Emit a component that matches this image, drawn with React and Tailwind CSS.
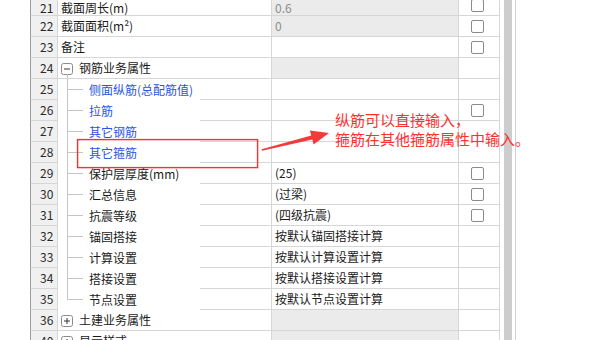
import React from "react";

const rows = [
  { no: 21, name: "截面周长(m)", value: "0.6", muted: true, check: true, first: true },
  { no: 22, name: "截面面积(m²)", value: "0", muted: true, check: true },
  { no: 23, name: "备注", value: "", check: true },
  { no: 24, name: "钢筋业务属性", group: "open" },
  { no: 25, name: "侧面纵筋(总配筋值)", child: true, blue: true },
  { no: 26, name: "拉筋", child: true, blue: true, check: true },
  { no: 27, name: "其它钢筋", child: true, blue: true },
  { no: 28, name: "其它箍筋", child: true, blue: true },
  { no: 29, name: "保护层厚度(mm)", value: "(25)", child: true, check: true },
  { no: 30, name: "汇总信息", value: "(过梁)", child: true, check: true },
  { no: 31, name: "抗震等级", value: "(四级抗震)", child: true, check: true },
  { no: 32, name: "锚固搭接", value: "按默认锚固搭接计算", child: true },
  { no: 33, name: "计算设置", value: "按默认计算设置计算", child: true },
  { no: 34, name: "搭接设置", value: "按默认搭接设置计算", child: true },
  { no: 35, name: "节点设置", value: "按默认节点设置计算", child: true, last: true },
  { no: 36, name: "土建业务属性", group: "closed" },
  { no: 40, name: "显示样式", group: "closed" },
];

const ExpandBox = ({ open }) => (
  <svg width="12" height="12" viewBox="0 0 12 12" className="shrink-0">
    <rect x="0.5" y="0.5" width="11" height="11" rx="2" fill="#fff" stroke="#8a8a8a" />
    <line x1="3" y1="6" x2="9" y2="6" stroke="#333" />
    {!open && <line x1="6" y1="3" x2="6" y2="9" stroke="#333" />}
  </svg>
);

const TreeLine = ({ last }) => (
  <svg width="31" height="21" viewBox="0 0 31 21" className="shrink-0">
    <line x1="9.5" y1="0" x2="9.5" y2={last ? 10.5 : 21} stroke="#c4c4c4" />
    <line x1="9" y1="10.5" x2="25" y2="10.5" stroke="#c4c4c4" />
  </svg>
);

const NameCell = ({ r, align }) => {
  if (r.child) {
    return (
      <div className="flex h-[21px] w-[214px] shrink-0 border-r border-[#d6d6d6]">
        <div className="flex w-[142px] shrink-0 items-center">
          <TreeLine last={r.last} />
          <span className={`whitespace-nowrap ${r.blue ? "text-[#2a55e0]" : "text-[#1a1a1a]"}`}>{r.name}</span>
        </div>
        <div className="flex-1 border-b border-[#d6d6d6]" />
      </div>
    );
  }
  if (r.group) {
    return (
      <div className="relative flex h-[21px] w-[214px] shrink-0 items-center border-r border-b border-[#d6d6d6] pl-[3px]">
        <div className="mt-[2px]">
          <ExpandBox open={r.group === "open"} />
        </div>
        <span className="ml-[6px] whitespace-nowrap text-[#1a1a1a]">{r.name}</span>
        {r.group === "open" && <div className="absolute bottom-0 left-[9px] h-[4px] w-px bg-[#c4c4c4]" />}
      </div>
    );
  }
  return (
    <div className={`flex h-[21px] w-[214px] shrink-0 border-r border-b border-[#d6d6d6] pl-[3px] text-[#1a1a1a] ${align}`}>
      <span className="whitespace-nowrap">{r.name}</span>
    </div>
  );
};

const Row = ({ r }) => {
  const grey = r.muted || r.group;
  // the first row is scrolled half out of view; its text sits low in the cell
  const align = r.first ? "items-end pb-[1px]" : "items-center";
  return (
    <div className="flex h-[21px]">
      <div className="w-[30px] shrink-0 bg-white" />
      <div
        className={`flex w-[28px] shrink-0 border-l border-r border-b border-l-[#9c9c9c] border-r-[#d6d6d6] border-b-[#d6d6d6] bg-[#f0f0f0] pl-[9px] text-[#2a2a2a] ${align}`}
      >
        {r.no}
      </div>
      <NameCell r={r} align={align} />
      <div
        className={`flex w-[187px] shrink-0 whitespace-nowrap border-r border-b border-[#d6d6d6] pl-[3px] ${align} ${
          grey ? "bg-[#ebebeb]" : "bg-white"
        } ${r.muted ? "text-[#8c8c8c]" : "text-[#1a1a1a]"}`}
      >
        {r.value}
      </div>
      <div className="flex w-[41px] shrink-0 items-center border-r border-b border-[#d6d6d6] pl-[12px]">
        {r.check && <span className="block h-[13px] w-[13px] rounded-[2px] border border-[#8a8a8a] bg-white" />}
      </div>
    </div>
  );
};

export default function App() {
  return (
    <div className="relative flex h-[340px] w-[600px] overflow-hidden bg-white font-['Noto_Sans_CJK_SC','Noto_Sans',sans-serif] text-[12px] leading-none">
      <div className="mt-[-5px] flex w-[500px] shrink-0 flex-col">
        {rows.map((r) => (
          <Row key={r.no} r={r} />
        ))}
      </div>

      {/* scrollbar strip */}
      <div className="flex h-full shrink-0">
        <div className="w-[4px] bg-white" />
        <div className="w-[8px] bg-[#cdcdcd]" />
        <div className="w-[3px] bg-white" />
        <div className="w-px bg-[#d0d0d0]" />
        <div className="w-[4px] bg-white" />
      </div>
      <div className="flex-1 bg-white" />

      {/* annotation: box + arrow */}
      <svg className="pointer-events-none absolute left-0 top-0" width="600" height="340" viewBox="0 0 600 340">
        <rect x="77.6" y="139.6" width="180" height="28" fill="none" stroke="#ff2e2e" strokeWidth="1.4" />
        <polygon
          points="262,150.8 312.3,139.6 313.6,144.6 329,133 309.8,130.4 311.3,135.6 261.6,149.2"
          fill="#f23a3a"
        />
      </svg>
      <div className="absolute left-[335px] top-[110px] whitespace-nowrap text-[15px] leading-[19px] text-[#ff3030]">
        <div>纵筋可以直接输入，</div>
        <div>箍筋在其他箍筋属性中输入。</div>
      </div>
    </div>
  );
}
